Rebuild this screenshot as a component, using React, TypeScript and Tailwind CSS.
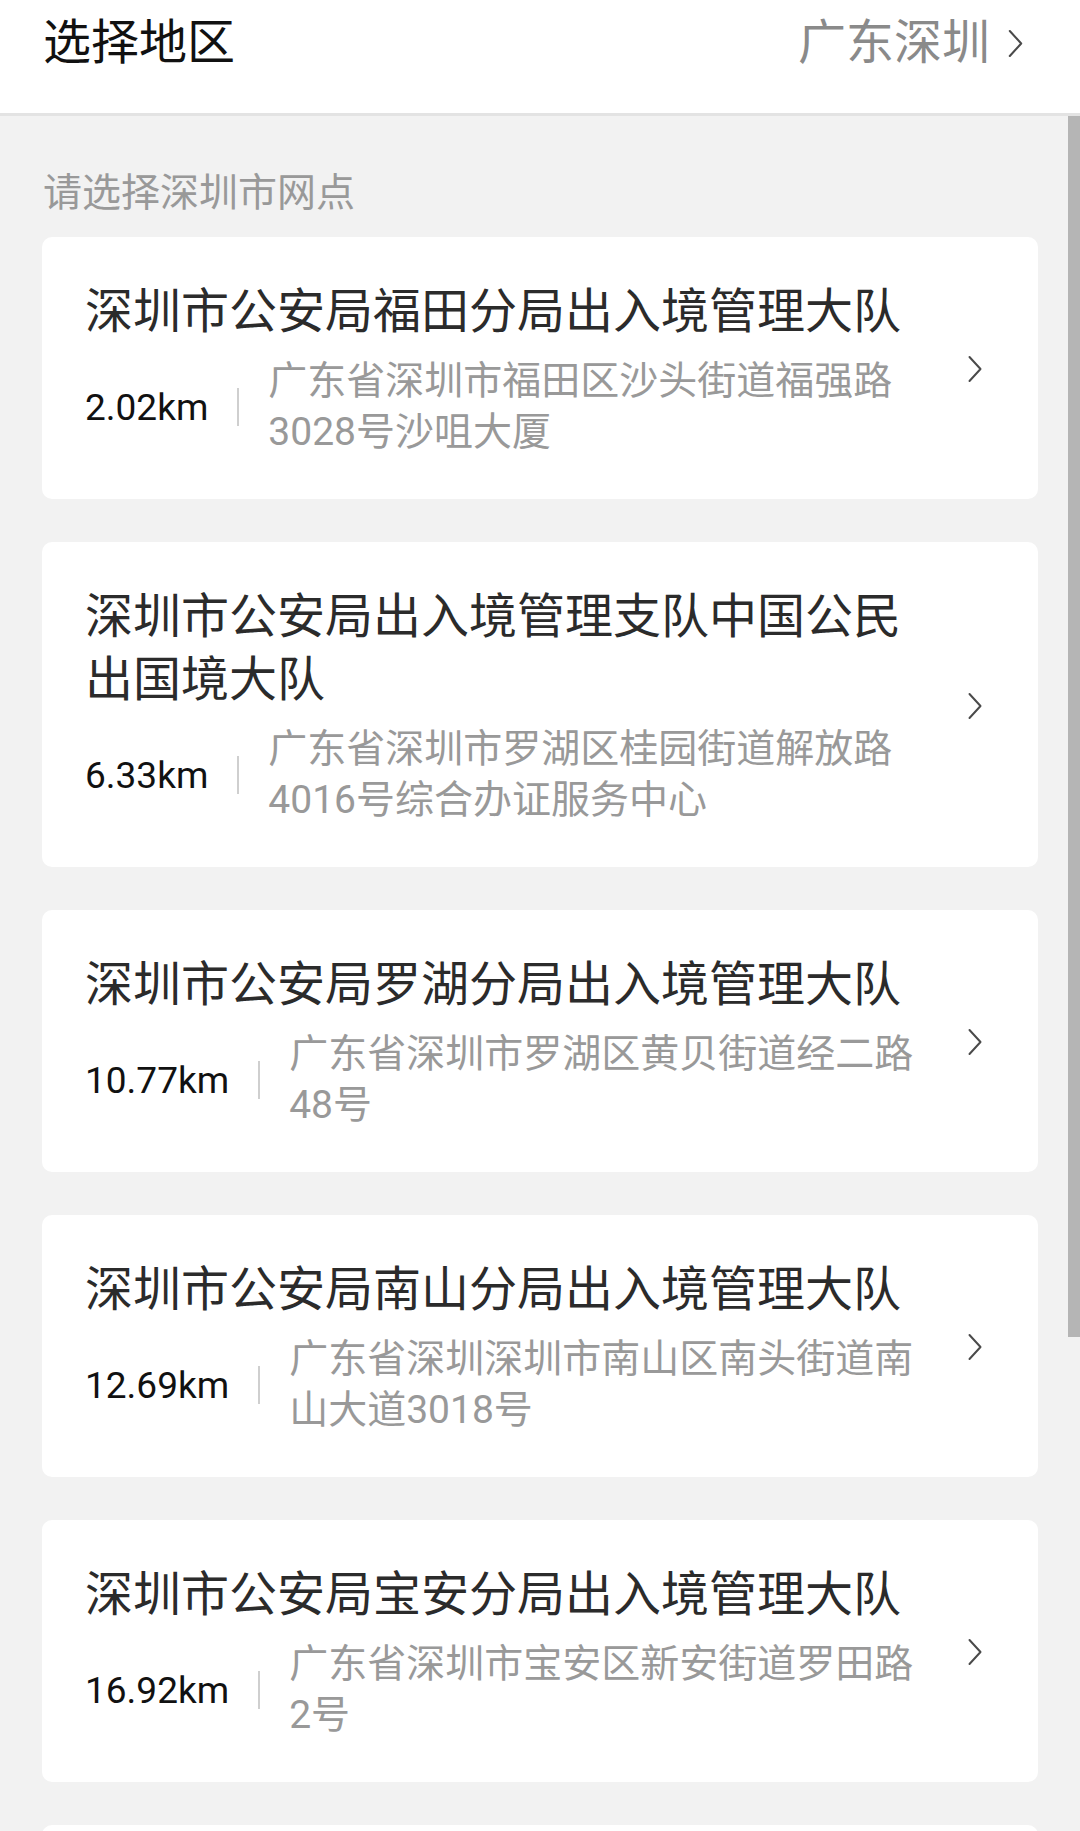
import React from "react";

type Item = { name: string; dist: string; addr: string };

const items: Item[] = [
  { name: "深圳市公安局福田分局出入境管理大队", dist: "2.02km", addr: "广东省深圳市福田区沙头街道福强路3028号沙咀大厦" },
  { name: "深圳市公安局出入境管理支队中国公民出国境大队", dist: "6.33km", addr: "广东省深圳市罗湖区桂园街道解放路4016号综合办证服务中心" },
  { name: "深圳市公安局罗湖分局出入境管理大队", dist: "10.77km", addr: "广东省深圳市罗湖区黄贝街道经二路48号" },
  { name: "深圳市公安局南山分局出入境管理大队", dist: "12.69km", addr: "广东省深圳深圳市南山区南头街道南山大道3018号" },
  { name: "深圳市公安局宝安分局出入境管理大队", dist: "16.92km", addr: "广东省深圳市宝安区新安街道罗田路2号" },
];

function Chevron({ className }: { className?: string }) {
  return (
    <svg className={className} viewBox="0 0 16 28" fill="none">
      <path d="M2.5 2 L13.5 14 L2.5 26" stroke="#4a4a4a" strokeWidth="2" strokeLinecap="round" strokeLinejoin="round" />
    </svg>
  );
}

export default function App() {
  return (
    <div className="relative w-[1080px] h-[1831px] overflow-hidden bg-[#f2f2f2] font-['Roboto','Noto_Sans_CJK_SC',sans-serif]">
      <header className="h-[116px] bg-white border-b-[3px] border-[#e3e3e3] flex items-start justify-between pl-[43px] pr-[55px]">
        <div className="mt-[14px] text-[48px] leading-[58px] text-[#111]">选择地区</div>
        <div className="mt-[14px] flex items-center">
          <span className="text-[48px] leading-[58px] text-[#8a8a8a]">广东深圳</span>
          <Chevron className="ml-[16px] w-[19px] h-[29px]" />
        </div>
      </header>
      <div className="pt-[52px] pl-[42px] pr-[42px]">
        <div className="text-[39px] leading-[50px] text-[#999] pl-[1px]">请选择深圳市网点</div>
        <div className="mt-[19px] flex flex-col gap-[43px]">
          {items.map((it, i) => (
            <div key={i} className="bg-white rounded-[10px] pl-[43px] pr-[55px] pt-[43px] pb-[41px] flex items-center">
              <div className="flex-1 min-w-0 pr-[40px]">
                <div className="text-[48px] leading-[63px] text-[#2b2b2b]">{it.name}</div>
                <div className="mt-[13px] flex items-center">
                  <span className="text-[37px] leading-[51px] text-[#111] whitespace-nowrap">{it.dist}</span>
                  <span className="mx-[29px] w-[2px] h-[38px] bg-[#cfcfcf] shrink-0" />
                  <span className="flex-1 min-w-0 text-[39px] leading-[51px] text-[#999]">{it.addr}</span>
                </div>
              </div>
              <Chevron className="w-[16px] h-[28px] shrink-0" />
            </div>
          ))}
          <div className="bg-white rounded-[10px] h-[262px]" />
        </div>
      </div>
      <div className="absolute right-0 top-[116px] w-[12px] h-[1221px] bg-[#b5b5b5]" />
    </div>
  );
}
